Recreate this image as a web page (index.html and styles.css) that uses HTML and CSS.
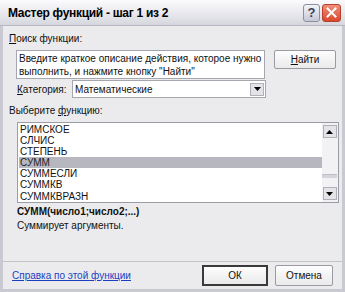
FILE: index.html
```html
<!DOCTYPE html>
<html lang="ru">
<head>
    <meta charset="UTF-8">
    <title>Мастер функций - шаг 1 из 2</title>
    <link rel="stylesheet" href="styles.css">
</head>
<body>
    <div class="window">
        <div class="titlebar">
            <span class="title">Мастер функций - шаг 1 из 2</span>
            <div class="title-buttons">
                <div class="tbtn help">?</div>
                <div class="tbtn close">
                    <svg width="11" height="11" viewBox="0 0 11 11">
                        <path d="M1.5 1.5L9.5 9.5M9.5 1.5L1.5 9.5" stroke="#fff" stroke-width="2" stroke-linecap="square"></path>
                    </svg>
                </div>
            </div>
        </div>

        <div class="dialog">
            <div class="label"><u>П</u>оиск функции:</div>
            <div class="search-row">
                <div class="search-box">Введите краткое описание действия, которое нужно выполнить, и нажмите кнопку "Найти"</div>
                <button class="btn find"><u>Н</u>айти</button>
            </div>
            <div class="category-row">
                <span class="cat-label"><u>К</u>атегория:</span>
                <div class="select">
                    <span>Математические</span>
                    <div class="arrow-btn">
                        <svg width="7" height="4" viewBox="0 0 7 4"><path d="M0 0H7L3.5 4Z" fill="#000"></path></svg>
                    </div>
                </div>
            </div>

            <div class="label pick">Выберите <u>ф</u>ункцию:</div>
            <div class="listbox">
                <ul class="items">
                    <li>РИМСКОЕ</li>
                    <li>СЛЧИС</li>
                    <li>СТЕПЕНЬ</li>
                    <li class="selected">СУММ</li>
                    <li>СУММЕСЛИ</li>
                    <li>СУММКВ</li>
                    <li>СУММКВРАЗН</li>
                </ul>
                <div class="scrollbar">
                    <div class="arrow-btn">
                        <svg width="7" height="4" viewBox="0 0 7 4"><path d="M0 4H7L3.5 0Z" fill="#000"></path></svg>
                    </div>
                    <div class="track">
                        <div class="thumb"></div>
                    </div>
                    <div class="arrow-btn">
                        <svg width="7" height="4" viewBox="0 0 7 4"><path d="M0 0H7L3.5 4Z" fill="#000"></path></svg>
                    </div>
                </div>
            </div>

            <div class="signature">СУММ(число1;число2;...)</div>
            <div class="description">Суммирует аргументы.</div>

            <div class="footer">
                <a href="#" class="help-link">Справка по этой функции</a>
                <button class="btn ok">ОК</button>
                <button class="btn cancel">Отмена</button>
            </div>
        </div>
    </div>
</body>
</html>
```

FILE: styles.css
```css
:root {
    --face: #ebebed;
    --frame: #c9c9d1;
    --text: #111;
    --link: #1a3fc4;
    --select-bg: #b7b7bf;
}

body {
    margin: 0;
    font-family: 'Liberation Sans', Arial, sans-serif;
    font-size: 10px;
    color: var(--text);
    background: #fff;
}

.window {
    width: 345px;
    height: 292px;
    box-sizing: border-box;
    display: flex;
    flex-direction: column;
    background: var(--face);
    border: 3px solid var(--frame);
    border-top: none;
    border-bottom-width: 3px;
}

.titlebar {
    height: 25px;
    margin: 0 -3px;
    padding: 0 4px 0 8px;
    display: flex;
    align-items: center;
    justify-content: space-between;
    background: linear-gradient(#fbfbfd, #e6e6ec 60%, #d6d6de);
    border-bottom: 1px solid #b8b8c2;
}

.title {
    font-size: 12px;
    font-weight: bold;
    color: #000;
    letter-spacing: -0.3px;
}

.title-buttons {
    display: flex;
    gap: 2px;
}

.tbtn {
    width: 17px;
    height: 18px;
    border-radius: 3px;
    display: flex;
    align-items: center;
    justify-content: center;
    box-sizing: border-box;
}

.help {
    background: linear-gradient(#f3f3f8, #c5c8d6);
    border: 1px solid #8b8fa3;
    color: #3a3f57;
    font-weight: bold;
    font-size: 13px;
}

.close {
    width: 19px;
    background: linear-gradient(#f08f7a, #d9482e);
    border: 1px solid #b6402c;
}

.dialog {
    flex: 1;
    display: flex;
    flex-direction: column;
    padding: 7px 3px 0 6px;
}

.label {
    line-height: 12px;
}

.search-row {
    display: flex;
    align-items: flex-start;
    margin: 5px 0 0 7px;
}

.search-box {
    width: 249px;
    height: 29px;
    box-sizing: border-box;
    padding: 1px 2px;
    background: #fff;
    border: 1px solid #a6a6ae;
    line-height: 13px;
}

.btn {
    font-family: inherit;
    font-size: 10px;
    color: #111;
    background: linear-gradient(#fdfdfd, #eaeaea);
    border: 1px solid #9a9aa2;
    border-radius: 2px;
    padding: 0;
}

.find {
    width: 62px;
    height: 19px;
    margin-left: 9px;
}

.category-row {
    display: flex;
    align-items: center;
    margin: 1px 0 0 8px;
}

.cat-label {
    width: 55px;
}

.select {
    width: 194px;
    height: 18px;
    box-sizing: border-box;
    display: flex;
    align-items: center;
    justify-content: space-between;
    background: #fff;
    border: 1px solid #a6a6ae;
    padding-left: 2px;
}

.arrow-btn {
    width: 14px;
    height: 13px;
    box-sizing: border-box;
    display: flex;
    align-items: center;
    justify-content: center;
    background: #e4e4e8;
    border: 1px solid #b0b0b8;
    margin-right: 1px;
}

.pick {
    margin-top: 7px;
}

.listbox {
    display: flex;
    margin: 5px 0 0 8px;
    width: 322px;
    height: 81px;
    box-sizing: border-box;
    background: #fff;
    border: 1px solid #9c9ca4;
    overflow: hidden;
}

.items {
    flex: 1;
    list-style: none;
    margin: 0;
    padding: 1px 0 0 1px;
}

.items li {
    height: 11.1px;
    line-height: 11.1px;
    padding-left: 1px;
}

.items .selected {
    background: var(--select-bg);
    color: #222;
}

.scrollbar {
    width: 16px;
    display: flex;
    flex-direction: column;
    align-items: center;
    background: #f2f2f4;
    padding: 2px 0;
}

.track {
    flex: 1;
    width: 100%;
    display: flex;
    flex-direction: column;
    justify-content: flex-end;
}

.thumb {
    height: 3px;
    margin: 0 1px 9px 0;
    background: #d4d4da;
    border-top: 1px solid #c0c0c8;
}

.signature {
    margin: 2px 0 0 8px;
    font-weight: bold;
    line-height: 13px;
}

.description {
    margin: 1px 0 0 8px;
    line-height: 13px;
}

.footer {
    margin-top: auto;
    height: 26px;
    margin-left: -6px;
    margin-right: -3px;
    padding: 0 9px 1px 9px;
    border-top: 1px solid #c2c2c8;
    display: flex;
    align-items: center;
}

.help-link {
    color: var(--link);
    text-decoration: underline;
    margin-right: auto;
}

.ok {
    width: 66px;
    height: 21px;
    border: 2px solid #3a3a3a;
    border-radius: 0;
}

.cancel {
    width: 58px;
    height: 21px;
    margin-left: 7px;
}
```
